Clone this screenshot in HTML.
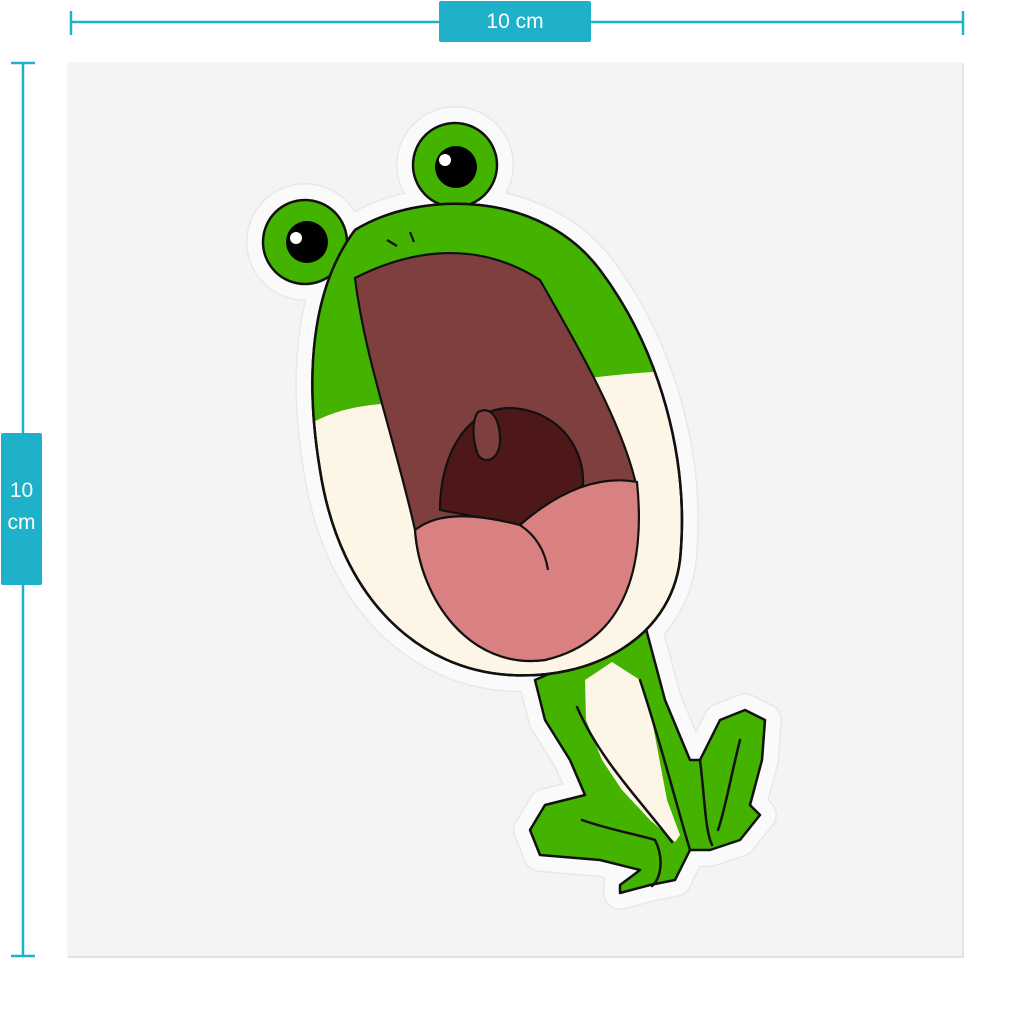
<!DOCTYPE html>
<html><head><meta charset="utf-8"><style>
html,body{margin:0;padding:0;background:#fff;width:1024px;height:1024px;overflow:hidden}
.lbl{position:absolute;background:#1eb1c9;color:#fff;font-family:"Liberation Sans",sans-serif;font-size:21px;text-align:center;border-radius:2px}
</style></head><body>
<svg width="1024" height="1024" style="position:absolute;left:0;top:0">
<defs>
<clipPath id="hc"><path d="M355 230 C420 190,540 190,600 270 C660 350,690 460,680 560 C670 640,590 680,510 675 C420 670,340 600,320 470 C305 380,310 290,355 230Z"/></clipPath>
</defs>
<g stroke="#1eb1c9" stroke-width="2.5" fill="none">
<line x1="71" y1="22" x2="963" y2="22"/><line x1="71" y1="11" x2="71" y2="35"/><line x1="963" y1="11" x2="963" y2="35"/>
<line x1="23" y1="63" x2="23" y2="956"/><line x1="11" y1="63" x2="35" y2="63"/><line x1="11" y1="956" x2="35" y2="956"/>
</g>
<rect x="68" y="63" width="896" height="895" fill="#e2e2e2"/>
<rect x="67" y="62" width="895" height="894" fill="#f4f4f4"/>
<!-- sticker border -->
<g fill="#fafafa" stroke="#e8e8e8" stroke-width="34" stroke-linejoin="round">
<path d="M355 230 C420 190,540 190,600 270 C660 350,690 460,680 560 C670 640,590 680,510 675 C420 670,340 600,320 470 C305 380,310 290,355 230Z"/>
<circle cx="305" cy="242" r="42"/><circle cx="455" cy="165" r="42"/>
<path d="M535 680 L545 720 570 760 585 795 545 805 530 830 540 855 600 860 640 870 620 885 620 893 650 885 675 880 690 850 710 850 740 840 760 815 750 805 762 760 765 720 745 710 720 720 700 760 690 760 665 700 645 625Z"/>
</g>
<g fill="#fafafa" stroke="#fafafa" stroke-width="31" stroke-linejoin="round">
<path d="M355 230 C420 190,540 190,600 270 C660 350,690 460,680 560 C670 640,590 680,510 675 C420 670,340 600,320 470 C305 380,310 290,355 230Z"/>
<circle cx="305" cy="242" r="42"/><circle cx="455" cy="165" r="42"/>
<path d="M535 680 L545 720 570 760 585 795 545 805 530 830 540 855 600 860 640 870 620 885 620 893 650 885 675 880 690 850 710 850 740 840 760 815 750 805 762 760 765 720 745 710 720 720 700 760 690 760 665 700 645 625Z"/>
</g>
<!-- legs -->
<g stroke="#111" stroke-width="2.5" stroke-linejoin="round" stroke-linecap="round">
<path fill="#44b300" d="M535 680 L545 720 570 760 585 795 545 805 530 830 540 855 600 860 640 870 620 885 620 893 650 885 675 880 690 850 710 850 740 840 760 815 750 805 762 760 765 720 745 710 720 720 700 760 690 760 665 700 645 625 615 645Z"/>
<path fill="#fdf5e6" stroke="none" d="M585 680 L612 662 640 680 652 720 667 800 680 835 675 842 650 820 622 790 602 760 586 720Z"/>
<path fill="none" d="M577 707 C600 760,640 800,672 842 M640 680 C660 740,675 800,690 850 M700 760 C705 800,705 830,712 845 M740 740 C730 780,725 810,718 830 M582 820 C610 830,640 835,655 840 M655 840 C665 860,660 880,652 886"/>
</g>
<!-- head -->
<g stroke="#111" stroke-width="2.5">
<circle cx="305" cy="242" r="42" fill="#44b300"/><circle cx="455" cy="165" r="42" fill="#44b300"/>
<path d="M355 230 C420 190,540 190,600 270 C660 350,690 460,680 560 C670 640,590 680,510 675 C420 670,340 600,320 470 C305 380,310 290,355 230Z" fill="#fdf5e6"/>
</g>
<path clip-path="url(#hc)" fill="#44b300" d="M300 180 L700 180 L700 370 C620 372,560 380,500 395 C420 410,360 390,300 430Z"/>
<path d="M355 230 C420 190,540 190,600 270 C660 350,690 460,680 560 C670 640,590 680,510 675 C420 670,340 600,320 470 C305 380,310 290,355 230Z" fill="none" stroke="#111" stroke-width="2.5"/>
<g stroke="#111" stroke-width="2.2">
<path fill="#7f3f3f" d="M355 278 C400 255,470 235,540 280 C580 350,620 420,635 480 C645 560,630 640,545 660 C470 670,420 600,415 530 C395 440,365 360,355 278Z"/>
<path fill="#4e1818" d="M440 510 C440 450,470 408,510 408 C560 410,585 450,583 485 L520 525Z"/>
<path fill="#7f3f3f" d="M478 412 C492 405,500 420,500 440 C500 460,485 465,478 455 C472 440,472 420,478 412Z"/>
<path fill="#d98080" d="M415 530 C440 510,480 515,520 525 C560 490,600 475,637 482 C645 560,630 640,545 660 C470 670,420 600,415 530Z"/>
<path fill="none" d="M520 525 C535 535,545 550,548 570 M387 240 L397 246 M410 232 L414 242"/>
</g>
<circle cx="307" cy="242" r="21" fill="#000"/><circle cx="296" cy="238" r="6" fill="#fff"/>
<circle cx="456" cy="167" r="21" fill="#000"/><circle cx="445" cy="160" r="6" fill="#fff"/>
</svg>
<div class="lbl" style="left:439px;top:1px;width:152px;height:41px;line-height:41px">10 cm</div>
<div class="lbl" style="left:1px;top:433px;width:41px;height:152px;padding-top:42px;box-sizing:border-box;line-height:32px">10<br>cm</div>
</body></html>
